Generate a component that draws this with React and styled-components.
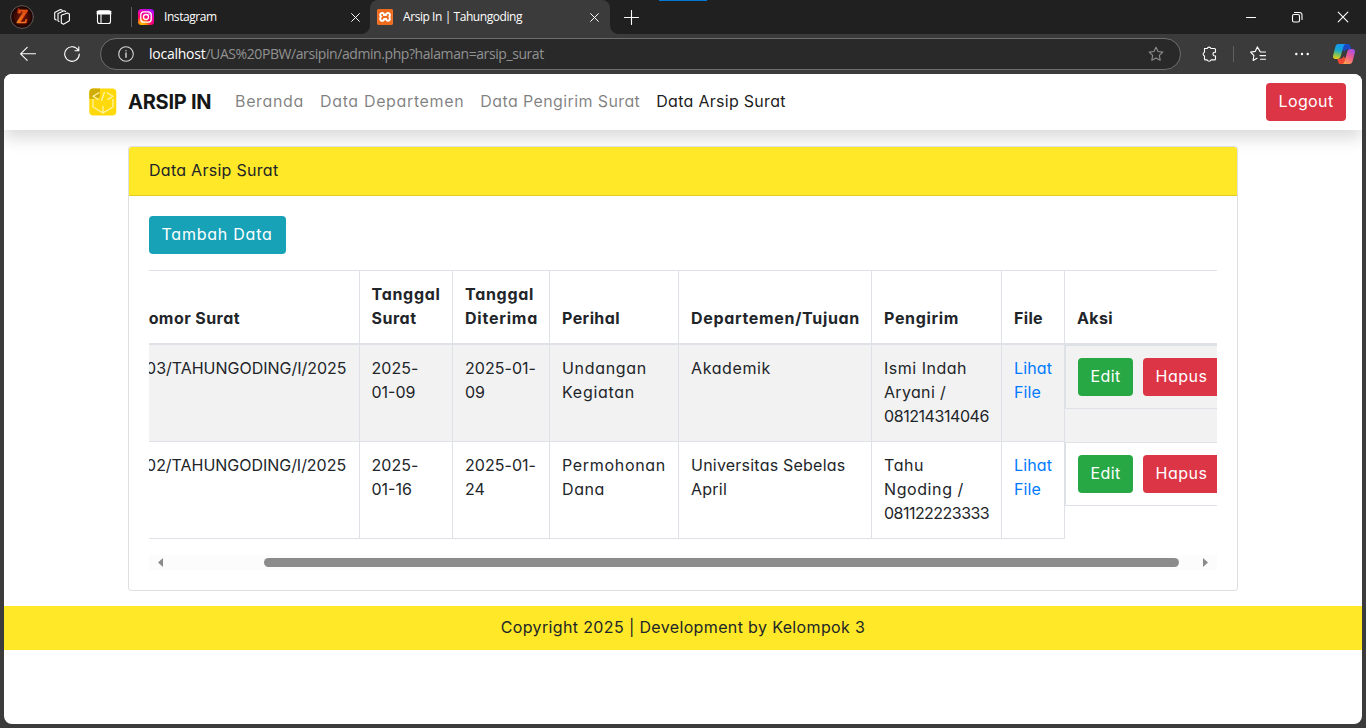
import React from "react";
import styled, { createGlobalStyle, css } from "styled-components";
import { SiXampp } from "react-icons/si";

const Global = createGlobalStyle`
  *, *::before, *::after { box-sizing: border-box; }
  html, body { margin: 0; height: 100%; overflow: hidden; }
  body {
    font-family: Inter, "Open Sans", sans-serif;
    font-feature-settings: "cv11";
    font-size: 16px;
    line-height: 24px;
    color: #212529;
    background: #3b3b3b;
  }
`;

const Window = styled.div`
  width: 1366px;
  height: 728px;
  display: flex;
  flex-direction: column;
  background: #3b3b3b;
`;

/* Browser chrome */

const TabStrip = styled.header`
  position: relative;
  display: flex;
  align-items: center;
  height: 34px;
  flex: none;
  padding: 0 11px 0 10px;
  background: #202020;
  color: #fff;
  font: 12px/16px "Open Sans", "Noto Sans", sans-serif;
`;

const StripTools = styled.div`
  display: flex;
  align-items: center;
  width: 122px;
  border-right: 1px solid #5c5c5c;
  height: 20px;
`;

const StripIcon = styled.svg`
  display: block;
  flex: none;
  width: ${(p) => p.$size || 16}px;
  height: ${(p) => p.$size || 16}px;
  margin-left: ${(p) => p.$gap || 0}px;
  fill: none;
  stroke: ${(p) => p.$color || "#fff"};
  stroke-width: ${(p) => p.$weight || 1.1};
  stroke-linecap: round;
  stroke-linejoin: round;
`;

const Tab = styled.div`
  position: relative;
  display: flex;
  align-items: center;
  width: ${(p) => p.$width}px;
  height: 34px;
  padding: 0 ${(p) => p.$end}px 0 ${(p) => p.$start}px;
  ${(p) =>
    p.$active &&
    css`
      background: #3b3b3b;
      border-radius: 8px 8px 0 0;
      &::before,
      &::after {
        content: "";
        position: absolute;
        bottom: 0;
        width: 8px;
        height: 8px;
      }
      &::before {
        left: -8px;
        background: radial-gradient(circle at 0 0, #202020 7.5px, #3b3b3b 8px);
      }
      &::after {
        right: -8px;
        background: radial-gradient(circle at 100% 0, #202020 7.5px, #3b3b3b 8px);
      }
    `}
`;

const TabTitle = styled.span`
  flex: 1;
  margin-left: 10px;
  white-space: nowrap;
  letter-spacing: -0.43px;
`;

const DropMark = styled.span`
  position: absolute;
  top: 0;
  left: 659px;
  width: 48px;
  height: 1px;
  background: #0078d4;
`;

const WindowControls = styled.div`
  display: flex;
  gap: 30px;
  margin-left: auto;
  padding-right: 4px;
`;

const Toolbar = styled.div`
  display: flex;
  align-items: center;
  flex: none;
  height: 40px;
  padding-left: 20px;
`;

const AddressBar = styled.div`
  display: flex;
  align-items: center;
  width: 1081px;
  height: 32px;
  margin-left: 20px;
  padding: 0 16px 0 17px;
  border: 1px solid #6e6e6e;
  border-radius: 16px;
  background: #292929;
  color: #929292;
  font: 14px/20px "Open Sans", "Noto Sans", sans-serif;
`;

const Url = styled.span`
  flex: 1;
  margin-left: 15px;
  white-space: nowrap;
  letter-spacing: -0.42px;
`;

const Host = styled.span`
  color: #fff;
  letter-spacing: -0.25px;
`;

const ToolDivider = styled.span`
  width: 1px;
  height: 16px;
  margin-left: 16px;
  background: #606060;
`;

/* Page */

const Page = styled.div`
  display: flex;
  flex-direction: column;
  height: 650px;
  margin: 0 4px;
  overflow: hidden;
  border-radius: 8px;
  background: #fff;
`;

const Navbar = styled.nav`
  display: flex;
  align-items: center;
  flex: none;
  height: 56px;
  padding: 0 16px 0 85px;
  background: #fff;
  box-shadow: 0 8px 16px rgba(0, 0, 0, 0.15);
`;

const Brand = styled.div`
  width: 107px;
  margin-left: 11px;
  font-size: 20px;
  font-weight: 700;
  letter-spacing: -0.25px;
  white-space: nowrap;
  color: #161616;
`;

const NavLinks = styled.div`
  display: flex;
  gap: 16px;
  flex: 1;
  padding-bottom: 2px;
`;

const NavLink = styled.a`
  letter-spacing: ${(p) => p.$track}px;
  white-space: nowrap;
  color: ${(p) => (p.$active ? "rgba(0,0,0,.9)" : "rgba(0,0,0,.5)")};
`;

const tones = { danger: "#dc3545", info: "#17a2b8", success: "#28a745" };

const Button = styled.button`
  flex: none;
  width: ${(p) => p.$width}px;
  height: 38px;
  padding: 0 0 2px 12.5px;
  border: 0;
  border-radius: 4px;
  background: ${(p) => tones[p.$tone]};
  color: #fff;
  font: inherit;
  font-feature-settings: inherit;
  letter-spacing: ${(p) => p.$track}px;
  text-align: left;
  white-space: nowrap;
`;

const Card = styled.section`
  width: 1110px;
  flex: none;
  margin: 16px 0 15px 124px;
  border: 1px solid rgba(0, 0, 0, 0.125);
  border-radius: 4px;
  background: #fff;
`;

const CardHeader = styled.div`
  padding: 11px 20px 13px;
  border-bottom: 1px solid rgba(0, 0, 0, 0.125);
  border-radius: 3px 3px 0 0;
  background: #ffe827;
  letter-spacing: 0.28px;
`;

const CardBody = styled.div`
  padding: 20px;
`;

const TableViewport = styled.div`
  margin-top: 16px;
  overflow: hidden;
`;

const Table = styled.table`
  width: 1109px;
  margin: 0 0 16px -25px;
  border-collapse: collapse;
  table-layout: fixed;
`;

const Col = styled.col`
  width: ${(p) => p.$width}px;
`;

const cell = css`
  padding: 11px 12px 13px;
  border: 1px solid #dee2e6;
  text-align: left;
  white-space: nowrap;

  &:first-child {
    padding-left: 11px;
  }
  &:nth-child(2) {
    padding-left: 11.5px;
  }
`;

const HeadCell = styled.th`
  ${cell}
  border-bottom-width: 2px;
  vertical-align: bottom;
  font-weight: 700;
`;

const Row = styled.tr`
  background: ${(p) => (p.$striped ? "#f2f2f2" : "#fff")};
`;

const Cell = styled.td`
  ${cell}
  vertical-align: top;
`;

const ActionCell = styled.td`
  ${cell}
  display: flex;
  gap: 10px;
  padding: 12px;
`;

const Line = styled.span`
  display: block;
  letter-spacing: ${(p) => p.$track}px;
  color: ${(p) => (p.$link ? "#007bff" : "inherit")};
`;

const ScrollBar = styled.div`
  display: flex;
  align-items: center;
  height: 15px;
  padding: 0 9px;
  background: #fcfcfc;
`;

const ScrollTrack = styled.div`
  flex: 1;
  padding: 0 24px 0 101px;
`;

const ScrollThumb = styled.div`
  height: 9px;
  border-radius: 5px;
  background: #8b8b8b;
`;

const ScrollArrow = styled.svg`
  width: 5px;
  height: 9px;
  fill: #8b8b8b;
`;

const Footer = styled.footer`
  flex: none;
  height: 44px;
  padding-top: 9px;
  background: #ffe827;
  text-align: center;
  letter-spacing: 0.36px;
`;

const columns = [
  { width: 235, head: [["Nomor Surat", 0.43]] },
  { width: 93, head: [["Tanggal", 0.7], ["Surat", 0.5]] },
  { width: 97, head: [["Tanggal", 0.7], ["Diterima", 0.78]] },
  { width: 129, head: [["Perihal", 0.41]] },
  { width: 193, head: [["Departemen/Tujuan", 0.68]] },
  { width: 130, head: [["Pengirim", 0.66]] },
  { width: 63, head: [["File", 0.35]] },
  { width: 169, head: [["Aksi", 0.37]] },
];

const letters = [
  [
    [["003/TAHUNGODING/I/2025", -0.02]],
    [["2025-", 0.06], ["01-09", 0]],
    [["2025-01-", 0.04], ["09", 0]],
    [["Undangan", 0.69], ["Kegiatan", 0.72]],
    [["Akademik", 0.62]],
    [["Ismi Indah", 0.51], ["Aryani /", 0.33], ["081214314046", -0.43]],
  ],
  [
    [["002/TAHUNGODING/I/2025", -0.03]],
    [["2025-", 0.06], ["01-16", 0]],
    [["2025-01-", 0.04], ["24", 0]],
    [["Permohonan", 0.69], ["Dana", 0.6]],
    [["Universitas Sebelas", 0.22], ["April", 0.23]],
    [["Tahu", 0.55], ["Ngoding /", 0.59], ["081122223333", -0.53]],
  ],
];

const Lines = ({ items, link }) =>
  items.map(([text, track]) => (
    <Line key={text} $track={track} $link={link}>
      {text}
    </Line>
  ));

const CloseIcon = () => (
  <StripIcon viewBox="0 0 10 10" $size={9}>
    <path d="M.7.7l8.6 8.6M9.3.7L.7 9.3" />
  </StripIcon>
);

const MinimizeIcon = () => (
  <StripIcon viewBox="0 0 16 16">
    <path d="M3.500 8.500h9" />
  </StripIcon>
);

const Avatar = () => (
  <StripIcon viewBox="0 0 24 24" $size={24} stroke="none">
    <defs>
      <radialGradient id="ember">
        <stop offset="0" stopColor="#7a1606" />
        <stop offset=".65" stopColor="#3a0a05" />
        <stop offset="1" stopColor="#120404" />
      </radialGradient>
      <linearGradient id="flame" x1="0" y1="0" x2="0" y2="1">
        <stop offset="0" stopColor="#c9380b" />
        <stop offset=".6" stopColor="#f4701d" />
        <stop offset="1" stopColor="#ffa63a" />
      </linearGradient>
    </defs>
    <circle cx="12" cy="12" r="11.4" fill="url(#ember)" stroke="#6a6462" strokeWidth=".9" />
    <path d="M7 8c0-3 1-3 1-6 1 2 2 2 3 4l7-1-2 4z" fill="#a82508" stroke="none" />
    <text x="12.2" y="18.4" textAnchor="middle" fontFamily="Liberation Serif" fontWeight="700" fontStyle="italic" fontSize="18" fill="url(#flame)" stroke="#f0641a" strokeWidth=".5">Z</text>
  </StripIcon>
);

const InstagramIcon = () => (
  <StripIcon viewBox="0 0 16 16">
    <defs>
      <radialGradient id="insta" cx=".25" cy="1.05" r="1.15">
        <stop offset="0" stopColor="#ffd600" />
        <stop offset=".25" stopColor="#ff8a00" />
        <stop offset=".5" stopColor="#ff0169" />
        <stop offset=".8" stopColor="#e800b8" />
        <stop offset="1" stopColor="#a70bff" />
      </radialGradient>
    </defs>
    <rect width="16" height="16" rx="3.5" fill="url(#insta)" stroke="none" />
    <rect x="2.8" y="2.8" width="10.4" height="10.4" rx="3" strokeWidth="1.3" />
    <circle cx="8" cy="8" r="2.5" strokeWidth="1.3" />
    <circle cx="11" cy="5" r=".7" fill="#fff" stroke="none" />
  </StripIcon>
);

const XamppBadge = styled.span`
  display: flex;
  width: 16px;
  height: 16px;
  border-radius: 3px;
  background: #fff;
  color: #ee6a1c;
`;

const BrandLogo = () => (
  <StripIcon viewBox="0 0 28 28" $size={28} $color="#fff3a6" $weight={1.3}>
    <rect x=".3" y=".5" width="27" height="27" rx="4" fill="#ffd90a" stroke="none" />
    <path d="M4.3.5H11v6.2a4 4 0 0 1-4 4H.3V4.5a4 4 0 0 1 4-4z" fill="#d0ac05" stroke="none" />
    <path d="M10 4.8L4 8.2l5 3.2M18 4.8l6 3.4-5 3.2M15.4 4.5l-2.8 8" />
    <path d="M4 11.5V19l10 6 10-6v-7.500M14 18.500V25" />
  </StripIcon>
);

const CopilotIcon = () => (
  <StripIcon viewBox="0 0 22 20" $size={22} $gap={23}>
    <defs>
      <linearGradient id="cpl" x1=".4" y1="0" x2=".2" y2="1">
        <stop offset="0" stopColor="#1499f5" />
        <stop offset=".4" stopColor="#18a8cf" />
        <stop offset=".7" stopColor="#7cc35b" />
        <stop offset="1" stopColor="#f5cf17" />
      </linearGradient>
      <linearGradient id="cpr" x1=".8" y1="0" x2=".3" y2="1">
        <stop offset="0" stopColor="#a34fe8" />
        <stop offset=".5" stopColor="#ee5b8f" />
        <stop offset="1" stopColor="#ffa24c" />
      </linearGradient>
    </defs>
    <g stroke="none">
      <path d="M10 0h5c1.500 0 2 1 2.500 2.600l.8 2.600H15c-2 0-3 .8-3.500 2.500L9 5z" fill="#1b49c4" />
      <path d="M12 20H7.500C6 20 5.500 19 5 17.400l-.8-2.600H7c2 0 3-.8 3.500-2.500L13 15z" fill="#f04a35" />
      <path d="M5.500 0H13c-1.500 0-2.200 1.500-2.700 3L7.800 12c-.6 2-1.500 3-3.500 3H2.500C.3 15-.3 13.300.2 11.300L2.300 3C2.800 1 3.800 0 5.500 0z" fill="url(#cpl)" />
      <path d="M16.500 20H9c1.500 0 2.200-1.500 2.700-3l2.500-9c.6-2 1.500-3 3.500-3h1.800c2.200 0 2.800 1.700 2.300 3.700L19.700 17c-.5 2-1.500 3-3.200 3z" fill="url(#cpr)" />
    </g>
  </StripIcon>
);

const star = "M8 1.200l2.050 4.300 4.750.65-3.450 3.300.85 4.700L8 11.900l-4.200 2.250.85-4.700-3.450-3.300 4.750-.65z";

export default function App() {
  return (
    <Window>
      <Global />
      <TabStrip>
        <DropMark />
        <StripTools>
          <Avatar />
          <StripIcon viewBox="0 0 16 16" $gap={20}>
            <path d="M7.300 6.200l6-2.200 2.100 1.100v6.700l-5.900 3.400-2.200-1.200z" />
            <path d="M5 12.500l-1-.6V4.500l6-2.700 1.600.8M2.200 11l-1.500-1V3.400L6.500.6l1.700.7" />
          </StripIcon>
          <StripIcon viewBox="0 0 16 16" $gap={26}>
            <rect x="1.500" y="1.700" width="13" height="12.800" rx="2" />
            <path d="M1.500 2.800h13M1.500 4.500h13" strokeWidth="2" />
            <path d="M5 5v9.500" />
          </StripIcon>
        </StripTools>
        <Tab $width={238} $start={6} $end={10}>
          <InstagramIcon />
          <TabTitle>Instagram</TabTitle>
          <CloseIcon />
        </Tab>
        <Tab $active $width={240} $start={7} $end={11}>
          <XamppBadge>
            <SiXampp size={16} />
          </XamppBadge>
          <TabTitle>Arsip In | Tahungoding</TabTitle>
          <CloseIcon />
        </Tab>
        <StripIcon viewBox="0 0 15 15" $size={15} $gap={14}>
          <path d="M7.500 .5v14M.5 7.500h14" />
        </StripIcon>
        <WindowControls>
          <MinimizeIcon />
          <StripIcon viewBox="0 0 16 16">
            <rect x="3.500" y="5.500" width="7" height="7.500" rx="1.500" />
            <path d="M5.500 3.500h5a2.500 2.500 0 0 1 2.500 2.500v4.500" />
          </StripIcon>
          <StripIcon viewBox="0 0 16 16">
            <path d="M3.200 3.200l9.600 9.600M12.800 3.200l-9.600 9.600" />
          </StripIcon>
        </WindowControls>
      </TabStrip>

      <Toolbar>
        <StripIcon viewBox="0 0 16 16">
          <path d="M15.500 7.800H.8M7.200 1.300L.6 7.800l6.600 6.500" />
        </StripIcon>
        <StripIcon viewBox="0 0 16 16" $gap={28}>
          <path d="M14.300 4.300A7.300 7.300 0 1 0 15.300 8M14.800.8v3.900h-3.900" />
        </StripIcon>
        <AddressBar>
          <StripIcon viewBox="0 0 16 16" $color="#d6d6d6">
            <circle cx="8" cy="8" r="7.300" />
            <path d="M8 7v4.200M8 4.700v.1" strokeWidth="1.400" />
          </StripIcon>
          <Url>
            <Host>localhost</Host>/UAS%20PBW/arsipin/admin.php?halaman=arsip_surat
          </Url>
          <StripIcon viewBox="0 0 16 16" $color="#8f8f8f">
            <path d={star} />
          </StripIcon>
        </AddressBar>
        <StripIcon viewBox="0 0 16 16" $gap={20}>
          <path d="M3.500 2.500h2.700a2 2 0 0 1 3.800 0h3.500a1 1 0 0 1 1 1v2.800a1.900 1.900 0 1 0 0 3.600v3a1 1 0 0 1-1 1H10a2 2 0 0 1-3.800 0H4.500a1 1 0 0 1-1-1V10a2 2 0 0 1 0-3.800z" />
        </StripIcon>
        <ToolDivider />
        <StripIcon viewBox="0 0 16 16" $gap={16}>
          <path d="M10 5.400L7.300.9 5.200 5.400.6 6.100l3.300 3.400-.8 5 3.900-2.200M10.500 6h5M10 9.600h5.500M10.500 13.200h5" />
        </StripIcon>
        <StripIcon viewBox="0 0 16 16" $gap={28}>
          <path d="M2.300 8h.01M8 8h.01M13.700 8h.01" strokeWidth="2.400" />
        </StripIcon>
        <CopilotIcon />
      </Toolbar>

      <Page>
        <Navbar>
          <BrandLogo />
          <Brand>ARSIP IN</Brand>
          <NavLinks>
            <NavLink $track={0.66}>Beranda</NavLink>
            <NavLink $track={0.64}>Data Departemen</NavLink>
            <NavLink $track={0.39}>Data Pengirim Surat</NavLink>
            <NavLink $track={0.29} $active>Data Arsip Surat</NavLink>
          </NavLinks>
          <Button $tone="danger" $width={80} $track={0.38}>Logout</Button>
        </Navbar>

        <Card>
          <CardHeader>Data Arsip Surat</CardHeader>
          <CardBody>
            <Button $tone="info" $width={137} $track={0.76}>Tambah Data</Button>
            <TableViewport>
              <Table>
                <colgroup>
                  {columns.map((c, i) => (
                    <Col key={i} $width={c.width} />
                  ))}
                </colgroup>
                <thead>
                  <tr>
                    {columns.map((c, i) => (
                      <HeadCell key={i}>
                        <Lines items={c.head} />
                      </HeadCell>
                    ))}
                  </tr>
                </thead>
                <tbody>
                  {letters.map((cells, r) => (
                    <Row key={r} $striped={r % 2 === 0}>
                      {cells.map((items, i) => (
                        <Cell key={i}>
                          <Lines items={items} />
                        </Cell>
                      ))}
                      <Cell>
                        <Lines link items={[["Lihat", 0.12], ["File", 0.12]]} />
                      </Cell>
                      <ActionCell>
                        <Button $tone="success" $width={55} $track={0.37}>Edit</Button>
                        <Button $tone="danger" $width={77} $track={0.52}>Hapus</Button>
                      </ActionCell>
                    </Row>
                  ))}
                </tbody>
              </Table>
            </TableViewport>
            <ScrollBar>
              <ScrollArrow viewBox="0 0 5 9">
                <path d="M5 0v9L0 4.500z" />
              </ScrollArrow>
              <ScrollTrack>
                <ScrollThumb />
              </ScrollTrack>
              <ScrollArrow viewBox="0 0 5 9">
                <path d="M0 0v9l5-4.500z" />
              </ScrollArrow>
            </ScrollBar>
          </CardBody>
        </Card>

        <Footer>Copyright 2025 | Development by Kelompok 3</Footer>
      </Page>
    </Window>
  );
}
